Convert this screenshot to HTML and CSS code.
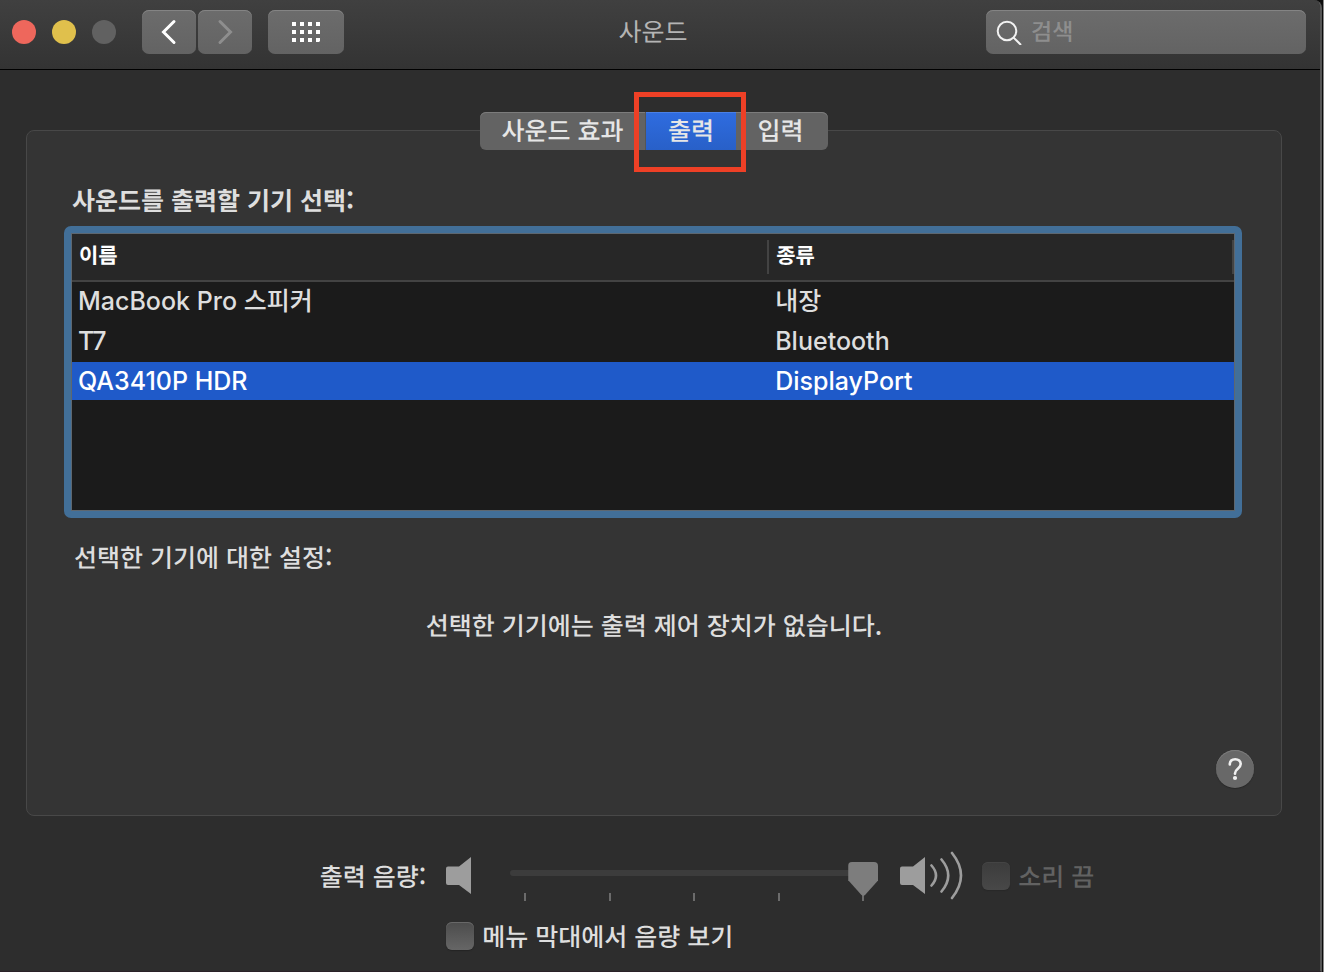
FILE: index.html
```
<!DOCTYPE html>
<html lang="ko">
<head>
<meta charset="utf-8">
<title>사운드</title>
<link rel="stylesheet" href="styles.css">
</head>
<body>
<div class="window">
  <header class="titlebar">
    <div class="titlebar-left">
      <div class="lights">
        <button class="light light-close" aria-label="닫기"></button>
        <button class="light light-min" aria-label="최소화"></button>
        <button class="light light-off" aria-label="확대" disabled></button>
      </div>
      <div class="nav">
        <button class="tool" aria-label="뒤로"><svg width="54" height="44" viewBox="0 0 54 44"><path d="M32 11.500 21.500 22 32 32.500" fill="none" stroke="#fff" stroke-width="3" stroke-linecap="round" stroke-linejoin="miter"/></svg></button>
        <button class="tool" aria-label="앞으로" disabled><svg width="54" height="44" viewBox="0 0 54 44"><path d="M22 11.500 32.500 22 22 32.500" fill="none" stroke="#8e8e8e" stroke-width="3" stroke-linecap="round"/></svg></button>
      </div>
      <button class="tool tool-grid" aria-label="모두 보기"><svg width="28" height="20" viewBox="0 0 28 20" fill="#fff"><path d="M0 0h4v4H0zM8 0h4v4H8zM16 0h4v4h-4zM24 0h4v4h-4zM0 8h4v4H0zM8 8h4v4H8zM16 8h4v4h-4zM24 8h4v4h-4zM0 16h4v4H0zM8 16h4v4H8zM16 16h4v4h-4zM24 16h4v3l-1 1h-3z"/></svg></button>
    </div>
    <h1 class="title">사운드</h1>
    <label class="search">
      <svg width="26" height="26" viewBox="0 0 26 26" fill="none" stroke="#f2f2f2" stroke-width="2"><circle cx="11" cy="12" r="9.300"/><path d="M17.600 18.600 25 26"/></svg>
      <input type="search" placeholder="검색" aria-label="검색">
    </label>
  </header>

  <main class="content">
    <nav class="tabs">
      <button class="tab tab-effects">사운드 효과</button>
      <button class="tab tab-output">출력<span class="marker"></span></button>
      <button class="tab tab-input">입력</button>
    </nav>
    <section class="panel">
      <h2 class="heading">사운드를 출력할 기기 선택:</h2>
      <div class="table-frame">
        <table class="devices">
          <thead>
            <tr><th class="col-name"><span>이름</span></th><th><span>종류</span></th></tr>
          </thead>
          <tbody>
            <tr><td>MacBook Pro 스피커</td><td>내장</td></tr>
            <tr><td>T7</td><td>Bluetooth</td></tr>
            <tr class="selected"><td>QA3410P HDR</td><td>DisplayPort</td></tr>
          </tbody>
        </table>
      </div>
      <p class="settings">선택한 기기에 대한 설정:</p>
      <p class="message">선택한 기기에는 출력 제어 장치가 없습니다.</p>
      <button class="help" aria-label="도움말"><svg width="38" height="38" viewBox="0 0 38 38"><path d="M13.800 14.500C13.800 11 16 9.200 19.200 9.200c3.300 0 5.500 2 5.500 4.900 0 4.600-5.700 4.600-5.700 9.200v.4" fill="none" stroke="#f0f0f0" stroke-width="2.600" stroke-linecap="round"/><circle cx="19" cy="28" r="2.100" fill="#f0f0f0"/></svg></button>
    </section>

    <section class="volume">
      <label class="volume-label" for="volume">출력 음량:</label>
      <div class="volume-row">
        <svg class="speaker" width="26" height="38" viewBox="0 0 26 38"><path d="M2 9.500h11L25 0v37L13 28H2Q0 28 0 26V11.500Q0 9.500 2 9.500z" fill="#9d9d9d"/></svg>
        <div class="slider">
          <input id="volume" type="range" min="0" max="4" value="4" disabled>
          <div class="ticks"><i></i><i></i><i></i><i></i><i></i></div>
        </div>
        <svg class="speaker-loud" width="64" height="50" viewBox="0 0 64 50"><path d="M2 15.500h11L25 6v37L13 34H2Q0 34 0 32V17.500Q0 15.500 2 15.500z" fill="#9d9d9d"/><path d="M31.500 14.500Q40.500 24.500 31.500 34.500M41.500 8.500Q55 24.500 41.500 40.500M52 2Q70 24.500 52 47" fill="none" stroke="#9d9d9d" stroke-width="2.600" stroke-linecap="round"/></svg>
        <label class="check check-off"><input type="checkbox" disabled>소리 끔</label>
      </div>
      <label class="check check-menu"><input type="checkbox">메뉴 막대에서 음량 보기</label>
    </section>
  </main>
</div>
</body>
</html>
```
FILE: styles.css
```
* {
  box-sizing: border-box;
}

body {
  margin: 0;
  background: linear-gradient(to right, #0c0c0c 50%, #8a8a8a 50%) right / 2px 100% no-repeat #0c0c0c;
  color: #dedede;
  font-family: "Noto Sans CJK KR", sans-serif;
  font-size: 25px;
  font-weight: 500;
  line-height: 40px;
  text-rendering: geometricPrecision;
}

button,
input {
  margin: 0;
  padding: 0;
  border: 0;
  color: inherit;
  font: inherit;
  text-rendering: inherit;
}

h1,
h2,
p {
  margin: 0;
  font-size: inherit;
}

svg {
  display: block;
}

.window {
  min-height: 100vh;
  margin-right: 2px;
  overflow: hidden;
  background: #2d2d2d;
  border-right: 2px solid #555;
  border-bottom: 1px solid #2a2228;
  border-top-right-radius: 8px;
}

.titlebar {
  display: grid;
  grid-template-columns: 1fr auto 1fr;
  align-items: start;
  height: 70px;
  padding: 10px 14px 0 12px;
  background: linear-gradient(#404040, #333);
  border-bottom: 1px solid #000;
}

.titlebar-left {
  display: flex;
  align-items: center;
  gap: 16px;
}

.lights {
  display: flex;
  gap: 16px;
  margin-right: 10px;
}

.light {
  width: 24px;
  height: 24px;
  border-radius: 50%;
}

.light-close {
  background: #ee675c;
}

.light-min {
  background: #e0c04c;
}

.light-off {
  background: #616161;
}

.nav {
  display: flex;
  gap: 2px;
}

.tool,
.search {
  height: 44px;
  background: linear-gradient(#6c6c6c, #636363);
  border-radius: 7px;
  box-shadow: inset 0 1px #848484;
}

.tool {
  width: 54px;
}

.tool-grid {
  display: grid;
  place-items: center;
  width: 76px;
}

.title {
  margin-right: 12px;
  color: #b4b4b4;
  font-weight: 400;
  line-height: 42px;
}

.search {
  display: flex;
  align-items: center;
  gap: 9px;
  justify-self: end;
  width: 320px;
  padding: 0 10px;
}

.search input {
  flex: 1;
  min-width: 0;
  height: 40px;
  padding-bottom: 4px;
  background: none;
  outline: 0;
  font-size: 23px;
}

.search input::placeholder {
  color: #8e8e8e;
}

.content {
  padding: 42px 38px 15px 26px;
}

.tabs {
  position: relative;
  z-index: 1;
  display: flex;
  justify-content: center;
}

.tab {
  height: 38px;
  padding-bottom: 2px;
  background: #636363;
  box-shadow: inset 0 1px #7c7c7c;
  color: #e6e6e6;
  line-height: 32px;
}

.tab-effects {
  width: 166px;
  border-right: 1px solid #555;
  border-radius: 6px 0 0 6px;
}

.tab-output {
  position: relative;
  width: 90px;
  background: linear-gradient(#2f6ce0, #2860c8);
  box-shadow: inset 0 1px #4a80e6;
}

.tab-input {
  width: 92px;
  padding-right: 3px;
  border-radius: 0 6px 6px 0;
}

.marker {
  position: absolute;
  inset: -20px -10px -22px -12px;
  border: 5px solid #ee4026;
  pointer-events: none;
}

.panel {
  display: flex;
  flex-direction: column;
  margin-top: -20px;
  padding: 49px 27px 27px 37px;
  background: #343434;
  border: 1px solid #484848;
  border-radius: 8px;
}

.heading {
  padding-left: 8px;
  font-weight: 700;
}

.table-frame {
  height: 292px;
  margin: 6px 12px 0 0;
  background: #1b1b1b;
  border: 7px solid #426f98;
  border-radius: 7px;
  box-shadow: inset 0 0 0 1px #5d6770;
  padding: 1px;
}

.devices {
  width: 100%;
  border-spacing: 0;
  table-layout: fixed;
}

.devices th {
  height: 48px;
  padding: 0;
  background: #272727;
  border-bottom: 2px solid #434343;
  color: #fff;
  font-size: 21px;
  font-weight: 600;
  text-align: left;
}

.devices th span {
  display: block;
  height: 34px;
  padding-left: 7px;
  border-right: 2px solid #434343;
  line-height: 30px;
}

.col-name {
  width: 60%;
}

.devices td {
  height: 40px;
  padding: 0 6px;
  border-bottom: 2px solid #1b1b1b;
  font-family: Inter, "Noto Sans CJK KR", sans-serif;
  line-height: 38px;
  text-rendering: auto;
}

.selected td {
  background: #1f5ac9;
  color: #fff;
}

.settings {
  margin-top: 19px;
  padding-left: 10px;
}

.message {
  margin-top: 28px;
  margin-right: 10px;
  text-align: center;
}

.help {
  align-self: flex-end;
  width: 38px;
  height: 38px;
  margin-top: 105px;
  background: #686868;
  border-radius: 50%;
  box-shadow: inset 0 1px #7c7c7c, 0 1px 1px #282828;
}

.volume {
  display: grid;
  grid-template-columns: auto auto;
  justify-content: center;
  align-items: center;
  gap: 15px 20px;
  margin-top: 35px;
  padding-left: 106px;
}

.volume-row {
  display: flex;
  align-items: center;
  height: 50px;
}

.slider {
  align-self: flex-end;
  width: 368px;
  margin: 0 22px 0 38px;
}

.slider input {
  position: relative;
  z-index: 1;
  display: block;
  width: 100%;
  height: 22px;
  background: none;
  appearance: none;
}

.slider input::-webkit-slider-runnable-track {
  height: 6px;
  background: #3c3c3c;
  border-radius: 3px;
}

.slider input::-webkit-slider-thumb {
  width: 30px;
  height: 34px;
  margin-top: -8px;
  background: #7d7d7d;
  border-radius: 4px;
  clip-path: polygon(0 0, 100% 0, 100% 54%, 56% 97%, 50% 100%, 44% 97%, 0 54%);
  appearance: none;
}

.ticks {
  display: flex;
  justify-content: space-between;
  margin-top: 9px;
  padding: 0 14px;
}

.ticks i {
  width: 2px;
  height: 8px;
  background: #6b6b6b;
}

.check {
  display: flex;
  align-items: center;
  gap: 8px;
}

.check input {
  width: 28px;
  height: 28px;
  background: linear-gradient(#4c4c4c, #666);
  border-radius: 6px;
  box-shadow: inset 0 1px #686868, 0 1px 1px #242424;
  appearance: none;
}

.check-off {
  margin-left: 18px;
  color: #626262;
}

.check-off input {
  background: linear-gradient(#3c3c3c, #484848);
  box-shadow: inset 0 1px #444, 0 1px 1px #282828;
}

.check-menu {
  grid-column: 2;
}
```
